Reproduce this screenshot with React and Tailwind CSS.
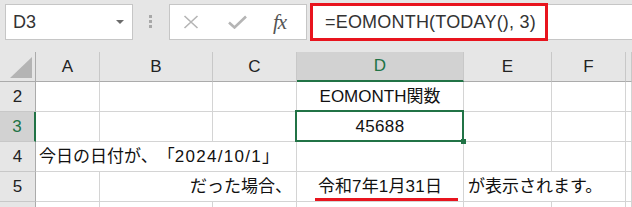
import React from "react";

const FONT = { fontFamily: '"Liberation Sans", "Noto Sans CJK JP", sans-serif' };

function HCell({ w, children, sel, grow }) {
  return (
    <div
      className={`${grow ? "flex-1" : ""} h-full flex items-center justify-center border-r border-r-[#c8c8c8] text-[17px] ${
        sel
          ? "bg-[#d2d2d2] text-[#217346] border-b-2 border-b-[#217346]"
          : "bg-[#e6e6e6] text-[#222] border-b border-b-[#ababab]"
      }`}
      style={w ? { width: w } : undefined}
    >
      {children}
    </div>
  );
}

function Cell({ w, children, noR, grow, align = "center", pad = "", top }) {
  const j = align === "left" ? "justify-start" : align === "right" ? "justify-end" : "justify-center";
  return (
    <div
      className={`${grow ? "flex-1" : ""} ${top ? "relative z-10" : ""} h-full flex items-center ${j} ${pad} bg-white border-b border-b-[#d4d4d4] ${
        noR ? "" : "border-r border-r-[#d4d4d4]"
      } whitespace-nowrap text-[17px] text-[#111]`}
      style={w ? { width: w } : undefined}
    >
      {children}
    </div>
  );
}

function RowHead({ n, sel }) {
  return (
    <div
      className={`w-[36px] h-full flex items-center justify-center text-[17px] border-b border-b-[#c8c8c8] ${
        sel
          ? "bg-[#d2d2d2] text-[#217346] border-r-2 border-r-[#217346]"
          : "bg-[#e6e6e6] text-[#222] border-r border-r-[#ababab]"
      }`}
    >
      {n}
    </div>
  );
}

const W = [64, 113, 84, 167, 88, 74];

export default function App() {
  return (
    <div
      className="relative w-[632px] h-[207px] overflow-hidden bg-[#e6e6e6] [text-spacing-trim:space-all]"
      style={FONT}
    >
      {/* top bar */}
      <div className="h-[52px] flex items-start pt-[4px]">
        <div className="ml-[5px] w-[128px] h-[36px] bg-white border border-[#c6c6c6] flex items-center justify-between pl-[7px] pr-[8px]">
          <span className="text-[18px] text-[#333]">D3</span>
          <svg width="8" height="4" viewBox="0 0 8 4">
            <polygon points="0,0 8,0 4,4" fill="#6b6b6b" />
          </svg>
        </div>
        <div className="ml-[16px] mt-[11px] flex flex-col gap-[2px]">
          <div className="w-[3px] h-[3px] bg-[#a8a8a8]" />
          <div className="w-[3px] h-[3px] bg-[#a8a8a8]" />
          <div className="w-[3px] h-[3px] bg-[#a8a8a8]" />
        </div>
        <div className="ml-[17px] w-[138px] h-[36px] bg-white border border-[#c6c6c6] flex items-center pl-[13px]">
          <svg width="16" height="14" viewBox="0 0 16 14">
            <path d="M1.5 1 L14.5 13 M14.5 1 L1.5 13" stroke="#b5b5b5" strokeWidth="1.6" fill="none" />
          </svg>
          <svg className="ml-[29px]" width="19" height="14" viewBox="0 0 19 14">
            <path d="M1 7.5 L6.5 12.5 L18 1.5" stroke="#b5b5b5" strokeWidth="2.6" fill="none" />
          </svg>
          <span
            className="ml-[26px] text-[21px] italic text-[#555] leading-none tracking-[-1px]"
            style={{ fontFamily: '"Liberation Serif", serif' }}
          >
            fx
          </span>
        </div>
        <div className="ml-[4px] flex-1 h-[36px] bg-white border-y border-[#c6c6c6] flex items-center pl-[14px]">
          <span className="text-[18px] text-[#333] tracking-[0.2px]">=EOMONTH(TODAY(), 3)</span>
        </div>
      </div>

      {/* column headers */}
      <div className="h-[30px] flex">
        <div className="w-[36px] h-full bg-[#e6e6e6] border-r border-r-[#ababab] border-b border-b-[#ababab] flex items-end justify-end pr-[3px] pb-[3px]">
          <svg width="22" height="21" viewBox="0 0 22 21">
            <polygon points="22,0 22,21 0,21" fill="#b4b4b4" />
          </svg>
        </div>
        <HCell w={W[0]}>A</HCell>
        <HCell w={W[1]}>B</HCell>
        <HCell w={W[2]}>C</HCell>
        <HCell w={W[3]} sel>D</HCell>
        <HCell w={W[4]}>E</HCell>
        <HCell w={W[5]}>F</HCell>
        <HCell grow />
      </div>

      {/* row 2 */}
      <div className="h-[30px] flex">
        <RowHead n="2" />
        <Cell w={W[0]} />
        <Cell w={W[1]} />
        <Cell w={W[2]} />
        <Cell w={W[3]}>EOMONTH関数</Cell>
        <Cell w={W[4]} />
        <Cell w={W[5]} />
        <Cell grow />
      </div>

      {/* row 3 */}
      <div className="h-[30px] flex">
        <RowHead n="3" sel />
        <Cell w={W[0]} />
        <Cell w={W[1]} />
        <Cell w={W[2]} />
        <Cell w={W[3]}>
          <span className="tracking-[0.3px]">45688</span>
        </Cell>
        <Cell w={W[4]} />
        <Cell w={W[5]} />
        <Cell grow />
      </div>

      {/* row 4 */}
      <div className="h-[30px] flex">
        <RowHead n="4" />
        <Cell w={W[0]} noR align="left" pad="pl-[3px]" top>
          <span className="shrink-0">
            今日の日付が、「<span className="tracking-[1.3px]">2024/10/1</span>」
          </span>
        </Cell>
        <Cell w={W[1]} noR />
        <Cell w={W[2]} />
        <Cell w={W[3]} />
        <Cell w={W[4]} />
        <Cell w={W[5]} />
        <Cell grow />
      </div>

      {/* row 5 */}
      <div className="h-[30px] flex">
        <RowHead n="5" />
        <Cell w={W[0]} />
        <Cell w={W[1]} noR />
        <Cell w={W[2]} align="right" pad="pr-[4px]" top>
          <span className="shrink-0">だった場合、</span>
        </Cell>
        <Cell w={W[3]}>
          <span>
            令和<span className="tracking-[0.3px]">7</span>年<span className="tracking-[0.3px]">1</span>月
            <span className="tracking-[0.3px]">31</span>日
          </span>
        </Cell>
        <Cell w={W[4]} noR align="left" pad="pl-[4px]" top>
          <span className="shrink-0">が表示されます。</span>
        </Cell>
        <Cell w={W[5]} />
        <Cell grow />
      </div>

      {/* row 6 (partial) */}
      <div className="h-[30px] flex">
        <RowHead n="" />
        <Cell w={W[0]} />
        <Cell w={W[1]} />
        <Cell w={W[2]} />
        <Cell w={W[3]} />
        <Cell w={W[4]} />
        <Cell w={W[5]} />
        <Cell grow />
      </div>

      {/* selection border */}
      <div className="absolute z-20 left-[295px] top-[110px] w-[169px] h-[32px] border-2 border-[#217346]" />
      <div className="absolute z-20 left-[461px] top-[139px] w-[5px] h-[5px] bg-[#217346]" />

      {/* annotations */}
      <div className="absolute z-20 left-[310px] top-[3px] w-[238px] h-[38px] border-[3px] border-[#e8141e]" />
      <div className="absolute z-20 left-[315px] top-[198px] w-[143px] h-[3px] bg-[#e8141e]" />
    </div>
  );
}
